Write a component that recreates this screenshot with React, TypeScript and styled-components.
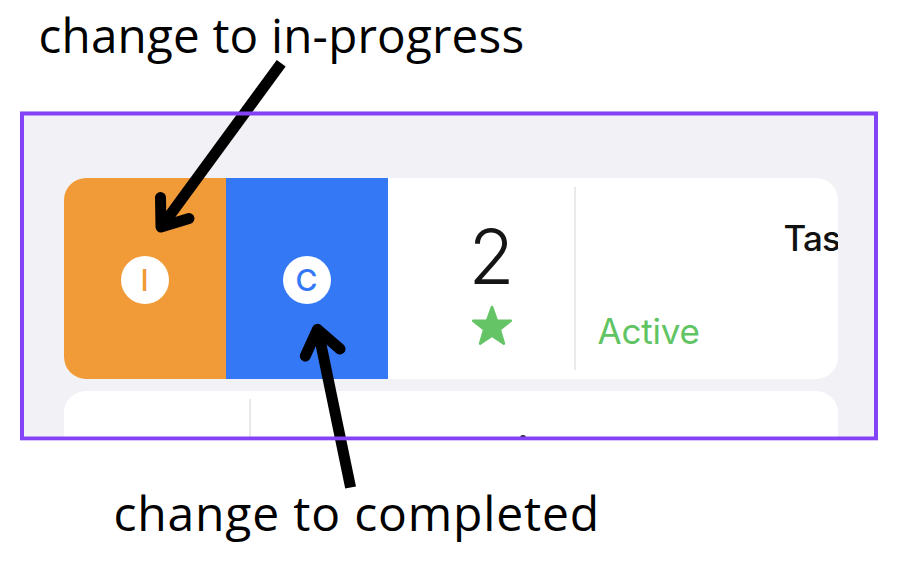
import React from "react";
import styled, { createGlobalStyle } from "styled-components";

const GlobalStyle = createGlobalStyle`
  * { box-sizing: border-box; }
  body { margin: 0; background: #fff; overflow: hidden; }
`;

const Page = styled.main`
  position: relative;
  width: 898px;
  height: 568px;
  display: flex;
  flex-direction: column;
  background: #fff;
  overflow: hidden;
`;

const Caption = styled.p<{ $indent: number; $height: number; $lift: number; $size: number; $spacing: number }>`
  margin: 0;
  height: ${(p) => p.$height}px;
  padding: ${(p) => p.$lift}px 0 0 ${(p) => p.$indent}px;
  font: 400 ${(p) => p.$size}px/56px "Open Sans", sans-serif;
  letter-spacing: ${(p) => p.$spacing}px;
  white-space: nowrap;
  color: #000;
`;

const Frame = styled.section`
  position: relative;
  flex: none;
  width: 858px;
  height: 328.4px;
  margin-left: 20px;
  padding: 67.1px 40.5px 0 43.5px;
  background: #f2f1f6;
  overflow: hidden;
  display: flex;
  flex-direction: column;
  gap: 11.8px;
`;

const FrameOutline = styled.div`
  position: absolute;
  left: 20px;
  top: 112px;
  width: 858px;
  height: 328px;
  border: solid #8344f7;
  border-width: 3px 4px;
  box-shadow:
    0 -1px #8344f780,
    0 1px #8344f750,
    inset 0 1px #8344f780,
    inset 0 -1px #8344f780;
`;

const Card = styled.article`
  flex: none;
  height: 200.5px;
  display: flex;
  background: #fff;
  border-radius: 22px;
  overflow: hidden;
`;

const SwipeAction = styled.button<{ $color: string }>`
  flex: none;
  width: 162px;
  padding: 2px 0 0;
  border: 0;
  display: flex;
  align-items: center;
  justify-content: center;
  background: ${(p) => p.$color};
  color: ${(p) => p.$color};
`;

const Badge = styled.span`
  width: 48px;
  height: 48px;
  border-radius: 50%;
  display: flex;
  align-items: center;
  justify-content: center;
  background: #fff;
  font: 500 30px/48px Inter, sans-serif;
`;

const Rank = styled.div`
  flex: none;
  width: 186px;
  padding: 41px 1px 0 23px;
  display: flex;
  flex-direction: column;
  align-items: center;
`;

const RankNumber = styled.span`
  font: 300 75px/75px Inter, sans-serif;
  color: #151515;
`;

const Star = styled.svg`
  display: block;
  width: 42px;
  height: 40px;
  margin-top: 11px;
`;

const Divider = styled.i`
  flex: none;
  width: 2px;
  margin: 8.5px 0;
  background: #e9e9e9;
`;

const Details = styled.div`
  flex: none;
  width: 420px;
  padding: 38px 0 0 22px;
  display: flex;
  flex-direction: column;
  gap: 49px;
  font: 400 35px/44px Inter, sans-serif;
  white-space: nowrap;
`;

const TaskName = styled.span`
  padding-left: 186px;
  font-weight: 500;
  letter-spacing: -0.8px;
  color: #111;
`;

const Status = styled.span`
  color: #61c463;
  letter-spacing: -0.2px;
`;

const EmptyRank = styled.div`
  flex: none;
  width: 185.5px;
`;

const NextTitle = styled.i`
  width: 6px;
  height: 6px;
  margin: 44.7px 0 0 269px;
  border-radius: 50%;
  background: #222;
`;

const Arrows = styled.svg`
  position: absolute;
  left: 0;
  top: 0;
  pointer-events: none;
`;

export default function App() {
  return (
    <>
      <GlobalStyle />
      <Page>
        <Caption $indent={38.5} $height={111.4} $lift={7} $size={47.6} $spacing={0.2}>change to in-progress</Caption>
        <Frame>
          <Card>
            <SwipeAction $color="#f19b38" aria-label="Change to in-progress"><Badge>I</Badge></SwipeAction>
            <SwipeAction $color="#3478f6" aria-label="Change to completed"><Badge>C</Badge></SwipeAction>
            <Rank>
              <RankNumber>2</RankNumber>
              <Star viewBox="0 0 42 40">
                <path
                  d="M21 2 L25.8 15.5 L39.8 15.7 L28.8 24.5 L32.9 38.6 L21 30.6 L9.1 38.6 L13.2 24.5 L2.2 15.7 L16.2 15.5 Z"
                  fill="#65c466"
                  stroke="#65c466"
                  strokeWidth="2.6"
                  strokeLinejoin="round"
                />
              </Star>
            </Rank>
            <Divider />
            <Details>
              <TaskName>Task</TaskName>
              <Status>Active</Status>
            </Details>
          </Card>
          <Card>
            <EmptyRank />
            <Divider />
            <NextTitle />
          </Card>
        </Frame>
        <Caption $indent={113.5} $height={128} $lift={45.5} $size={48} $spacing={0.83}>change to completed</Caption>
        <Arrows width="898" height="568" viewBox="0 0 898 568" fill="none" stroke="#000" strokeWidth="11">
          <path d="M281.2 63.2 L162 226" />
          <path d="M160.5 197.5 L161 227 L189 218.5" strokeLinecap="round" strokeLinejoin="round" />
          <path d="M350.6 487.5 L318 330" />
          <path d="M305.3 356 L317.5 329.3 L340 349" strokeLinecap="round" strokeLinejoin="round" />
        </Arrows>
        <FrameOutline />
      </Page>
    </>
  );
}
